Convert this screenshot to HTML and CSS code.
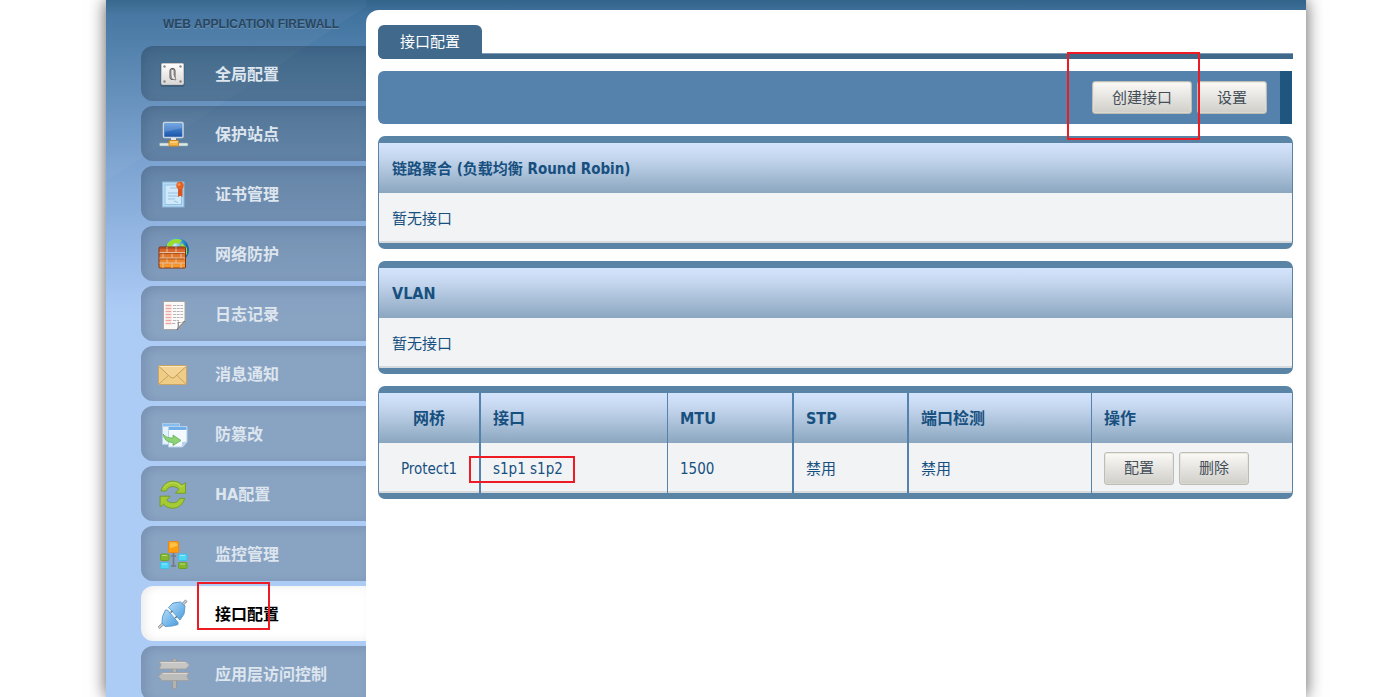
FILE: index.html
```html
<!DOCTYPE html>
<html lang="zh-CN">
<head>
<meta charset="utf-8">
<title>接口配置</title>
<link rel="stylesheet" href="styles.css">
</head>
<body>
<div class="frame">
  <aside class="sidebar">
    <div class="product">WEB APPLICATION FIREWALL</div>
    <nav class="menu">
      <a class="item" href="#">
        <svg class="icon" viewBox="1 1 32 32"><defs><linearGradient id="plate" x2="0" y2="1"><stop stop-color="#fff"/><stop offset="1" stop-color="#d9d7d6"/></linearGradient></defs><rect x="3.500" y="7" width="24" height="23" rx="2" fill="#24384c" opacity=".35"/><rect x="4.500" y="6.500" width="22" height="21" rx="1" fill="url(#plate)" stroke="#c9c6c5"/><g fill="#8a8682"><circle cx="7.500" cy="9.500" r="1.200"/><circle cx="23.500" cy="9.500" r="1.200"/><circle cx="7.500" cy="24.500" r="1.200"/><circle cx="23.500" cy="24.500" r="1.200"/></g><rect x="13" y="11.500" width="5" height="11" rx="2" fill="#b9b5b2" stroke="#5b5857"/><path d="M14 12l3 1v5l2 5-4-1-1-4z" fill="#eee" stroke="#6b6866" stroke-width=".7"/></svg>
        <span>全局配置</span></a>
      <a class="item" href="#">
        <svg class="icon" viewBox="0 0 32 32"><defs><linearGradient id="screen" x2="0" y2="1"><stop stop-color="#5c9be2"/><stop offset="1" stop-color="#1650a6"/></linearGradient></defs><rect x="5.500" y="4.500" width="19.500" height="15" rx="1" fill="url(#screen)" stroke="#c9d5df" stroke-width="1.500"/><path d="M7 6h17v4L7 14z" fill="#fff" opacity=".15"/><path d="M13 20h5v3h-5z" fill="#e4e8ec"/><rect x="1.500" y="25" width="28.500" height="3" rx="1" fill="#dce9e8" stroke="#8ba6ab" stroke-width=".6"/><rect x="11" y="22.500" width="9.500" height="5.500" rx="1" fill="#f5b84a" stroke="#d38416"/><path d="M12 24h7.500" stroke="#ffe2a1"/></svg>
        <span>保护站点</span></a>
      <a class="item" href="#">
        <svg class="icon" viewBox="0 0 32 32"><rect x="4.500" y="4" width="21.500" height="25" fill="#b4daf5" stroke="#8bb7da"/><rect x="7" y="7" width="16.500" height="19.500" fill="#cfe9fa" stroke="#93c1e4"/><path d="M12 10h8M10 15h10M10 18h10M10 21h7M16 23l4 1.500" stroke="#9bbfe0" fill="none"/><path d="M20 9h4.500v10l-2.200-1.300L20 19z" fill="#d8551f"/><circle cx="22" cy="7.500" r="3.700" fill="#e8601c"/><circle cx="21" cy="6.500" r="1.500" fill="#f6915a"/></svg>
        <span>证书管理</span></a>
      <a class="item" href="#">
        <svg class="icon" viewBox="0 0 32 32"><defs><radialGradient id="globe" cx=".4" cy=".3"><stop stop-color="#c9efff"/><stop offset=".7" stop-color="#3698dc"/><stop offset="1" stop-color="#176cb0"/></radialGradient><linearGradient id="brick" x2="0" y2="1"><stop stop-color="#cf5b2b"/><stop offset="1" stop-color="#fb9d2c"/></linearGradient></defs><circle cx="19" cy="12" r="12" fill="url(#globe)"/><path d="M9 6c4-5 10-6 15-4l-3 4-4-1-4 4-4 0zM24 5l5 5v7l-2-2-1-5-4-2z" fill="#9bdc2c"/><rect x="1" y="9" width="26.500" height="21" rx="1" fill="url(#brick)" stroke="#803414"/><path d="M1.500 14.500H27M1.500 20H27M1.500 25H27M9 9v5.500M18 9v5.500M5 14.500V20M14 14.500V20M23 14.500V20M9 20v5M18 20v5M5 25v5M14 25v5M23 25v5" stroke="#e6c1a0" fill="none"/><path d="M2 10.200h24M2 15.500h24M2 21h24" stroke="#8f3c18" stroke-width=".6"/></svg>
        <span>网络防护</span></a>
      <a class="item" href="#">
        <svg class="icon" viewBox="0 0 32 32"><path d="M5.500 3.500H27V24l-7 7.500H5.500z" fill="#fafafa" stroke="#aaa5a3"/><path d="M7.500 7.500h6M7.500 10.500h6M7.500 13.500h6M7.500 16.500h6M7.500 19.500h6M7.500 22.500h6M7.500 25.500h6" stroke="#eda6a1" stroke-width="1.500"/><path d="M15 7.500h10M15 10.500h10M15 13.500h10M15 16.500h10M15 19.500h10M15 22.500h6M14 25.500h4" stroke="#b9b5b4" stroke-width="1.200" stroke-dasharray="3 .7"/><path d="M27 23l-8 9c2-4 1-6 1-8 2 1 4 1 7-1z" fill="#aaa" stroke="#666" stroke-width=".7"/><path d="M25 24l-4 4v-3z" fill="#fff"/></svg>
        <span>日志记录</span></a>
      <a class="item" href="#">
        <svg class="icon" viewBox="0 0 32 32"><rect x=".5" y="7.500" width="28" height="19" rx="1" fill="#f0cd87" stroke="#c9a466"/><path d="M1 26l10.500-9.500M28 26L18 16.500" stroke="#c9a160" fill="none"/><path d="M1 8.500l11.500 10.700q2 1.600 4 0L28 8.500" fill="#f3d494" stroke="#c49b59"/><path d="M1.500 8.500h26" stroke="#fbe9bd"/></svg>
        <span>消息通知</span></a>
      <a class="item" href="#">
        <svg class="icon" viewBox="0 0 32 32"><path d="M4.500 5.500h17v21h-17z" fill="#e6f2fb" stroke="#a8cce9"/><path d="M5 6h16v2.500H5z" fill="#86bdec"/><path d="M10.500 8.500h18.500V24l-4.500 5h-14z" fill="#f3f9fe" stroke="#b4d2ec"/><path d="M11 9h17.500v3H11z" fill="#6fafe9"/><path d="M11 12.500h17.500" stroke="#fff"/><path d="M29 23.500l-5 5.500v-5z" fill="#b8d4ec"/><path d="M5 16c3 3.500 6 4 10 4v-3l8 5.500-8 5v-3C9 24.500 6 21 5 16z" fill="#8ed375" stroke="#62b059" stroke-width=".8"/></svg>
        <span>防篡改</span></a>
      <a class="item" href="#">
        <svg class="icon" viewBox="0 0 32 32"><g id="arrow" fill="#a5ca35" stroke="#6f9c22" stroke-width=".9" stroke-linejoin="round"><path d="M3 13C5 6 10 3.200 15 3.200c4 0 7 1.600 9 4L27.500 4.500v10.700H17.500l3.500-4c-2-2-4-2.600-6-2.600-4 0-6 2-7 4.400z"/></g><use href="#arrow" transform="rotate(180 14.800 16.700)"/><path d="M6 10c4-7 13-7 17-1l3-2" stroke="#c3dc55" fill="none"/></svg>
        <span>HA配置</span></a>
      <a class="item" href="#">
        <svg class="icon" viewBox="0 0 32 32"><path d="M15.500 14v14M13 18h5M13 28h5" stroke="#707a89" stroke-width="1.600"/><rect x="10.500" y="3.500" width="10" height="11" rx="1" fill="#ff9d0a" stroke="#e8891a"/><path d="M12 4.500h6l2 3-8 3z" fill="#ffc248"/><rect x="2.500" y="16" width="8.500" height="6.500" rx="1" fill="#84b72c" stroke="#6ba127"/><rect x="20.500" y="16" width="8.500" height="6.500" rx="1" fill="#4ed6f7" stroke="#3cc0e8"/><rect x="2.500" y="24.500" width="8.500" height="6" rx="1" fill="#4ed6f7" stroke="#3cc0e8"/><rect x="20.500" y="24.500" width="8.500" height="6" rx="1" fill="#84b72c" stroke="#6ba127"/><path d="M4 17.500h5M22 17.500h5M4 26h5M22 26h5" stroke="#fff" opacity=".45"/></svg>
        <span>监控管理</span></a>
      <a class="item current" href="#" aria-current="page">
        <svg class="icon" viewBox="0 0 32 32"><defs><linearGradient id="plug" x2="1" y2="1"><stop stop-color="#b3ddfb"/><stop offset="1" stop-color="#4a9bdc"/></linearGradient></defs><path d="M.5 30L7 24M22 9l6.500-6.500" stroke="#8b8f93" stroke-width="3"/><path d="M.5 30L7 24M22 9l6.500-6.500" stroke="#d4d6d8" stroke-width="1.200"/><path d="M4.500 18.500l3-6.500h2L20 24.500v2L14 28l-7 .5-3-3.500z" fill="url(#plug)" stroke="#5b9ccd"/><path d="M10.500 9.500L15 5l7.500-1L27 8l-1 8-4 6z" fill="url(#plug)" stroke="#5b9ccd"/><path d="M10 10.500L21.500 23.500" stroke="#eef4f8" stroke-width="1.600"/><path d="M12.500 14.500l2-1.500M17 20l2-1.500" stroke="#676e75" stroke-width="1.500"/></svg>
        <span class="label">接口配置<i class="mark mark-menu"></i></span></a>
      <a class="item" href="#">
        <svg class="icon" viewBox="0 0 32 32"><path d="M14.500 1.500q2-2 4 0V30q-2 2-4 0z" fill="#b4b3b0" stroke="#949492" stroke-width=".8"/><path d="M1 3.500h27l3.500 3.500-3.500 4H1l2-4z" fill="#c6c6c4" stroke="#a3a2a0"/><path d="M31 14.500H4L.5 18.500 4 22.500h27l-2-4z" fill="#bcbcba" stroke="#a3a2a0"/><path d="M3 4.500h24M5 15.500h24" stroke="#d8d8d6"/></svg>
        <span>应用层访问控制</span></a>
    </nav>
  </aside>

  <main class="main">
    <div class="tabs"><a class="tab" href="#">接口配置</a></div>

    <div class="toolbar">
      <span class="anchor"><button class="button" type="button">创建接口</button><i class="mark mark-create"></i></span>
      <button class="button" type="button">设置</button>
    </div>

    <section class="panel">
      <h2 class="panel-title">链路聚合 (负载均衡 Round Robin)</h2>
      <p class="panel-body">暂无接口</p>
    </section>

    <section class="panel">
      <h2 class="panel-title large">VLAN</h2>
      <p class="panel-body">暂无接口</p>
    </section>

    <section class="panel">
      <table class="bridges">
        <colgroup><col class="col-bridge"><col class="col-port"><col class="col-mtu"><col class="col-stp"><col class="col-check"><col></colgroup>
        <thead>
          <tr><th>网桥</th><th>接口</th><th>MTU</th><th>STP</th><th>端口检测</th><th>操作</th></tr>
        </thead>
        <tbody>
          <tr><td>Protect1</td><td><span class="anchor">s1p1 s1p2<i class="mark mark-port"></i></span></td><td>1500</td><td>禁用</td><td>禁用</td>
            <td><div class="actions"><button class="button" type="button">配置</button><button class="button" type="button">删除</button></div></td></tr>
        </tbody>
      </table>
    </section>
  </main>
</div>
</body>
</html>
```

FILE: styles.css
```css
* { box-sizing: border-box; }

body {
  margin: 0;
  padding-left: 21px;
  background: #fff;
  color: #17507f;
  font: 15px/20px "DejaVu Sans Condensed", "Noto Sans CJK SC", sans-serif;
}

.frame {
  display: grid;
  grid-template-columns: 260px minmax(0, 1fr);
  max-width: 1200px;
  height: 100vh;
  margin: 0 auto;
  background:
    linear-gradient(#33648a, rgba(51, 100, 138, 0) 14px),
    linear-gradient(#3f709b, #4375a1 20px, #7ba2d0 160px, #a9c8f3 300px, #accbf5 320px);
  box-shadow: 0 0 16px rgba(0, 0, 0, .65);
}

.sidebar {
  overflow: hidden;
  padding: 14px 0 0 35px;
  background: linear-gradient(146deg, rgba(255, 255, 255, .03) 150px, rgba(255, 255, 255, 0) 151px) no-repeat 0 0 / 100% 180px;
}

.product {
  margin-bottom: 12px;
  padding-left: 22px;
  color: #284660;
  font: bold 12px/20px "Liberation Sans", Arial, sans-serif;
  text-shadow: 0 1px 0 rgba(255, 255, 255, .2);
}

.menu { display: flex; flex-direction: column; gap: 5px; }

.item {
  display: flex;
  flex-shrink: 0;
  align-items: center;
  gap: 25px;
  height: 55px;
  padding-left: 17px;
  border-radius: 12px 0 0 12px;
  background: rgba(15, 25, 20, .22);
  box-shadow: inset 4px 2px 10px rgba(30, 45, 75, .14);
  color: #dde5ee;
  font-size: 16px;
  font-weight: bold;
  text-decoration: none;
}

.item span { padding-top: 2px; }

.item.current {
  background: #fff;
  box-shadow: inset 4px 0 10px rgba(0, 0, 0, .08);
  color: #000;
}

.icon { width: 32px; height: 32px; flex: none; }

.label, .anchor { position: relative; }

.mark {
  position: absolute;
  z-index: 2;
  border: 2px solid #ed1c24;
  pointer-events: none;
}
.mark-menu { left: -18px; top: -21px; width: 73px; height: 48px; }
.mark-create { left: -25px; top: -29px; width: 133px; height: 88px; }
.mark-port { left: -24px; top: -4px; width: 106px; height: 27px; }

.main {
  display: flex;
  flex-direction: column;
  gap: 12px;
  margin-top: 10px;
  padding: 15px 13px 12px 12px;
  border-radius: 13px 0 0 0;
  background: #fff;
}

.tabs {
  display: flex;
  border-radius: 0 0 0 6px;
  background: linear-gradient(#7f9db8 1px, #40688b 1px) no-repeat 0 100% / 100% 6px;
}

.tab {
  padding: 7px 22px;
  border-radius: 6px 6px 0 6px;
  background: #40698c;
  color: #fff;
  text-decoration: none;
}

.toolbar {
  display: flex;
  justify-content: flex-end;
  gap: 5px;
  margin-right: 1px;
  padding: 10px 13px 10px 0;
  border-right: 12px solid #1f5680;
  border-radius: 6px 0 0 6px;
  background: #5482ac;
}

.button {
  display: block;
  height: 33px;
  padding: 0 19px;
  border: 1px solid #bdbcb5;
  border-radius: 3px;
  background: linear-gradient(#fbfaf7, #e5e4e0 50%, #cfcec9);
  box-shadow: inset 0 0 0 1px rgba(225, 224, 214, .6);
  color: #444e58;
  font: inherit;
}

.panel {
  overflow: hidden;
  border: solid #5a84a6;
  border-width: 7px 1px 6px;
  border-radius: 7px;
  background: #f1f3f5;
}

.panel-title {
  margin: 0;
  padding: 16px 13px 14px;
  background: linear-gradient(#d4e4fc, #c4d6ee 30%, #8ba6bf);
  font-size: 15px;
  line-height: 20px;
}
.panel-title.large { font-size: 16px; }

.panel-body {
  margin: 0;
  padding: 16px 13px 12px;
  border-bottom: 2px solid #d8dbdd;
}

.bridges { width: 100%; table-layout: fixed; border-collapse: separate; border-spacing: 0; }
.col-bridge { width: 100px; }
.col-port { width: 188px; }
.col-mtu { width: 125px; }
.col-stp { width: 115px; }
.col-check { width: 184px; }

.bridges th, .bridges td {
  height: 50px;
  padding: 2px 12px 0;
  border-left: 2px solid #5482ac;
  text-align: left;
}
.bridges th:nth-child(3n), .bridges td:nth-child(3n) { border-left-width: 1px; }
.bridges th:first-child, .bridges td:first-child { border-left: 0; text-align: center; }
.bridges th { background: linear-gradient(#d4e4fc, #c4d6ee 30%, #8ba6bf); font-size: 16px; }
.bridges td { background: linear-gradient(#d8dbdd, #d8dbdd) no-repeat 0 100% / 100% 2px; }
.bridges td:last-child { padding: 0 12px; }

.actions { display: flex; gap: 5px; }
```
